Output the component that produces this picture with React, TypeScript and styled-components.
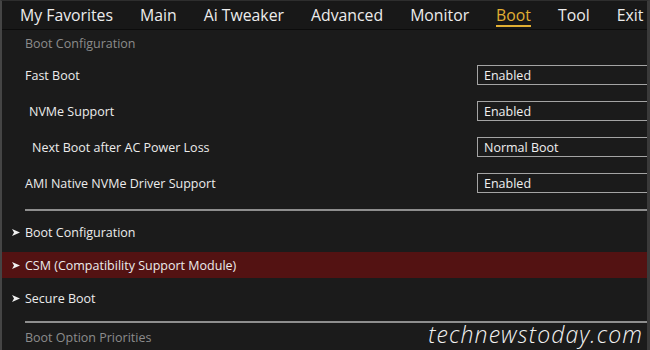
import React from "react";
import styled, { createGlobalStyle } from "styled-components";

const Global = createGlobalStyle`
  html, body { margin: 0; padding: 0; background: #1b1b1b; }
  body { width: 650px; height: 350px; overflow: hidden; }
`;

const Frame = styled.div`
  position: relative;
  width: 650px;
  height: 350px;
  box-sizing: border-box;
  background: #1b1b1b;
  border-left: 2px solid #454545;
  border-right: 3px solid #3a3a3a;
  border-top: 1px solid #2e2e2e;
  display: flex;
  flex-direction: column;
  font-family: "Open Sans", "Noto Sans", sans-serif;
  overflow: hidden;
`;

const NavBar = styled.nav`
  height: 28px;
  flex: none;
  display: flex;
  align-items: center;
  gap: 27px;
  padding-left: 18px;
  background: #181818;
  border-bottom: 1px solid #0c0c0c;
`;

const NavItem = styled.span<{ $active?: boolean }>`
  font-size: 15.8px;
  line-height: 20px;
  color: ${(p) => (p.$active ? "#e2b033" : "#ececec")};
  white-space: nowrap;
  padding-bottom: ${(p) => (p.$active ? "0" : "2px")};
  border-bottom: ${(p) => (p.$active ? "2px solid #e2b033" : "none")};
  margin-top: 2px;
`;

const Content = styled.div`
  display: flex;
  flex-direction: column;
`;

const SectionTitle = styled.div<{ $h: number }>`
  height: ${(p) => p.$h}px;
  display: flex;
  align-items: center;
  padding-left: 23px;
  font-size: 12.5px;
  color: #8c8c8c;
`;

const SettingRow = styled.div`
  height: 36px;
  display: flex;
  align-items: center;
  justify-content: space-between;
`;

const SettingLabel = styled.span<{ $indent: number }>`
  padding-left: ${(p) => 23 + p.$indent}px;
  font-size: 12.5px;
  color: #ececec;
`;

const Select = styled.div`
  width: 180px;
  height: 20px;
  box-sizing: border-box;
  margin-right: -10px;
  border: 1.5px solid #a4a4a4;
  border-right: none;
  display: flex;
  align-items: center;
  padding-left: 6px;
  font-size: 12.5px;
  color: #f0f0f0;
`;

const Divider = styled.hr<{ $top: number }>`
  margin: ${(p) => p.$top}px 0 0 23px;
  border: none;
  height: 2px;
  background: #8e8e8e;
  flex: none;
`;

const SubList = styled.div`
  display: flex;
  flex-direction: column;
  gap: 7px;
  margin-top: 8px;
  margin-bottom: 10px;
`;

const SubRow = styled.div<{ $active?: boolean }>`
  height: 26px;
  display: flex;
  align-items: center;
  gap: 5px;
  padding-left: 10px;
  background: ${(p) => (p.$active ? "#531212" : "transparent")};
  font-size: 12.5px;
  color: #ececec;
`;

const Arrow = styled.svg`
  width: 8px;
  height: 7px;
  flex: none;
`;

const Watermark = styled.div`
  position: absolute;
  right: 4px;
  bottom: 2px;
  font-family: "Open Sans", "Noto Sans", sans-serif;
  font-style: italic;
  font-weight: 300;
  font-size: 23px;
  letter-spacing: 1.1px;
  color: #f2f2f2;
  line-height: 28px;
`;

const nav = ["My Favorites", "Main", "Ai Tweaker", "Advanced", "Monitor", "Boot", "Tool", "Exit"];

const settings = [
  { label: "Fast Boot", value: "Enabled", indent: 0 },
  { label: "NVMe Support", value: "Enabled", indent: 4 },
  { label: "Next Boot after AC Power Loss", value: "Normal Boot", indent: 7 },
  { label: "AMI Native NVMe Driver Support", value: "Enabled", indent: 0 },
];

const subs = [
  { label: "Boot Configuration" },
  { label: "CSM (Compatibility Support Module)", active: true },
  { label: "Secure Boot" },
];

const ArrowIcon = () => (
  <Arrow viewBox="0 0 8 7">
    <polygon points="0,0 8,3.5 0,7 2,3.5" fill="#f0f0f0" />
  </Arrow>
);

export default function App() {
  return (
    <>
      <Global />
      <Frame>
        <NavBar>
          {nav.map((n) => (
            <NavItem key={n} $active={n === "Boot"}>
              {n}
            </NavItem>
          ))}
        </NavBar>
        <Content>
          <SectionTitle $h={27}>Boot Configuration</SectionTitle>
          {settings.map((s) => (
            <SettingRow key={s.label}>
              <SettingLabel $indent={s.indent}>{s.label}</SettingLabel>
              <Select>{s.value}</Select>
            </SettingRow>
          ))}
          <Divider $top={8} />
          <SubList>
            {subs.map((s) => (
              <SubRow key={s.label} $active={s.active}>
                <ArrowIcon />
                {s.label}
              </SubRow>
            ))}
          </SubList>
          <Divider $top={0} />
          <SectionTitle $h={29}>Boot Option Priorities</SectionTitle>
        </Content>
        <Watermark>technewstoday.com</Watermark>
      </Frame>
    </>
  );
}
